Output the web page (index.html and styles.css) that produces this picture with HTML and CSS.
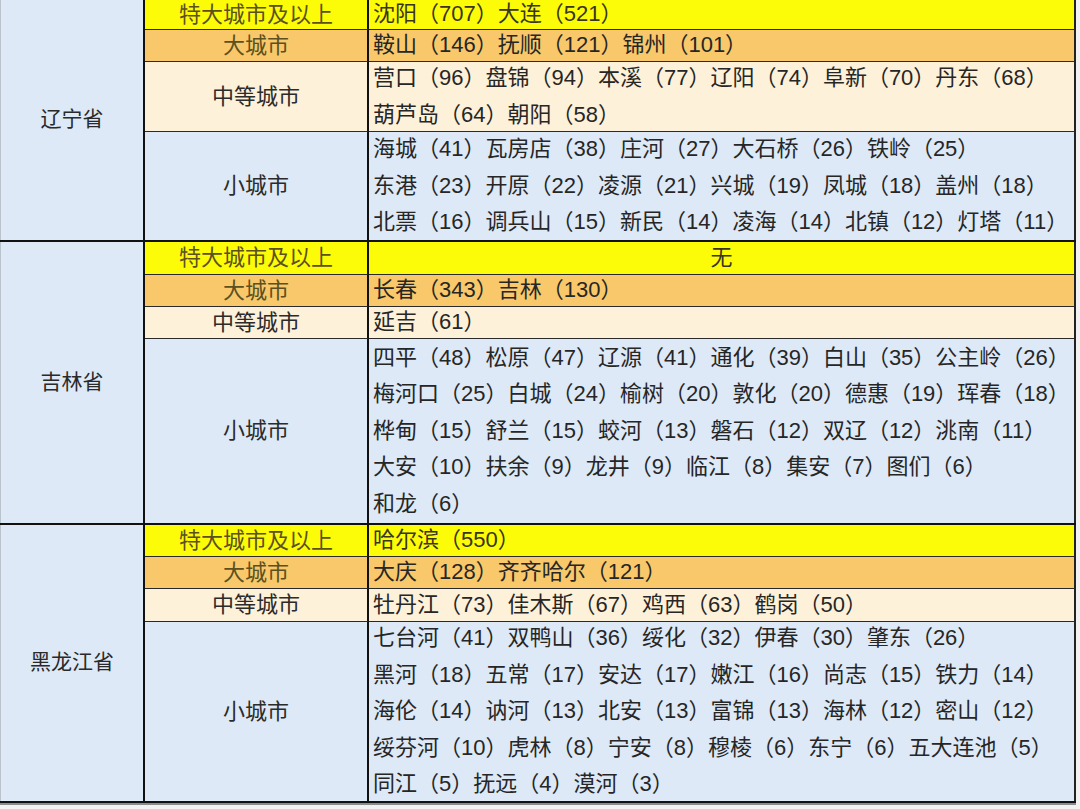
FILE: index.html
```html
<!DOCTYPE html>
<html lang="zh-CN">
<head>
<meta charset="utf-8">
<title>东北城市规模</title>
<link rel="stylesheet" href="styles.css">
</head>
<body>
<div class="sheet">
  <section class="prov liaoning">
    <div class="prov-name">辽宁省</div>
    <div class="cat top">特大城市及以上</div>
    <div class="cities top"><div class="line">沈阳（707）大连（521）</div></div>
    <div class="cat big">大城市</div>
    <div class="cities big"><div class="line">鞍山（146）抚顺（121）锦州（101）</div></div>
    <div class="cat mid">中等城市</div>
    <div class="cities mid">
      <div class="line">营口（96）盘锦（94）本溪（77）辽阳（74）阜新（70）丹东（68）</div>
      <div class="line">葫芦岛（64）朝阳（58）</div>
    </div>
    <div class="cat small last">小城市</div>
    <div class="cities small last">
      <div class="line">海城（41）瓦房店（38）庄河（27）大石桥（26）铁岭（25）</div>
      <div class="line">东港（23）开原（22）凌源（21）兴城（19）凤城（18）盖州（18）</div>
      <div class="line">北票（16）调兵山（15）新民（14）凌海（14）北镇（12）灯塔（11）</div>
    </div>
  </section>

  <section class="prov jilin">
    <div class="prov-name">吉林省</div>
    <div class="cat top">特大城市及以上</div>
    <div class="cities top none"><div class="line">无</div></div>
    <div class="cat big">大城市</div>
    <div class="cities big"><div class="line">长春（343）吉林（130）</div></div>
    <div class="cat mid">中等城市</div>
    <div class="cities mid"><div class="line">延吉（61）</div></div>
    <div class="cat small last">小城市</div>
    <div class="cities small last">
      <div class="line">四平（48）松原（47）辽源（41）通化（39）白山（35）公主岭（26）</div>
      <div class="line">梅河口（25）白城（24）榆树（20）敦化（20）德惠（19）珲春（18）</div>
      <div class="line">桦甸（15）舒兰（15）蛟河（13）磐石（12）双辽（12）洮南（11）</div>
      <div class="line">大安（10）扶余（9）龙井（9）临江（8）集安（7）图们（6）</div>
      <div class="line">和龙（6）</div>
    </div>
  </section>

  <section class="prov heilongjiang">
    <div class="prov-name">黑龙江省</div>
    <div class="cat top">特大城市及以上</div>
    <div class="cities top"><div class="line">哈尔滨（550）</div></div>
    <div class="cat big">大城市</div>
    <div class="cities big"><div class="line">大庆（128）齐齐哈尔（121）</div></div>
    <div class="cat mid">中等城市</div>
    <div class="cities mid"><div class="line">牡丹江（73）佳木斯（67）鸡西（63）鹤岗（50）</div></div>
    <div class="cat small last">小城市</div>
    <div class="cities small last">
      <div class="line">七台河（41）双鸭山（36）绥化（32）伊春（30）肇东（26）</div>
      <div class="line">黑河（18）五常（17）安达（17）嫩江（16）尚志（15）铁力（14）</div>
      <div class="line">海伦（14）讷河（13）北安（13）富锦（13）海林（12）密山（12）</div>
      <div class="line">绥芬河（10）虎林（8）宁安（8）穆棱（6）东宁（6）五大连池（5）</div>
      <div class="line">同江（5）抚远（4）漠河（3）</div>
    </div>
  </section>
</div>
</body>
</html>
```

FILE: styles.css
```css
html, body {
  margin: 0;
  padding: 0;
}
body {
  background: #f2f2f2;
  width: 1080px;
  height: 809px;
  overflow: hidden;
  font-family: "Liberation Sans", "Noto Sans CJK SC", sans-serif;
  color: #222;
}
.sheet {
  width: 1076px;
  border-bottom: 2px solid #8c8c8c;
  background: #fff;
}
.prov {
  display: grid;
  grid-template-columns: 145px 224px 707px;
  border-bottom: 2px solid #111;
}
.liaoning { grid-template-rows: 30px 32px 70px 108px; }
.jilin { grid-template-rows: 33px 32px 32px 184px; }
.heilongjiang { grid-template-rows: 32px 32px 33px 179px; }

.prov-name {
  grid-row: 1 / span 4;
  grid-column: 1;
  background: #dde9f6;
  border-left: 1px solid #b9c3cc;
  border-right: 2px solid #111;
  box-sizing: border-box;
  display: flex;
  align-items: center;
  justify-content: center;
  font-size: 21px;
  line-height: 30px;
  color: #2a2a2a;
  padding-bottom: 2px;
}
.cat, .cities {
  box-sizing: border-box;
  border-bottom: 1px solid #2a2a2a;
  display: flex;
  flex-direction: column;
  justify-content: center;
  overflow: visible;
}
.cat {
  grid-column: 2;
  border-right: 2px solid #111;
  align-items: center;
  font-size: 22px;
  line-height: 30px;
  color: #2b2b2b;
  white-space: nowrap;
}
.cities {
  grid-column: 3;
  border-right: 2px solid #222;
  padding-left: 4px;
  font-size: 22px;
  line-height: 36.5px;
  color: #262626;
}
.line {
  white-space: nowrap;
}
.cities.none {
  align-items: center;
  padding-left: 0;
}
.last {
  border-bottom: none;
}

.top { background: #fdfc08; }
.big { background: #f8c86a; }
.mid { background: #fef1da; }
.small { background: #dde9f6; }

.cat.top, .cat.big {
  color: #5c5020;
}
.cities.top {
  color: #3a3520;
}
```
